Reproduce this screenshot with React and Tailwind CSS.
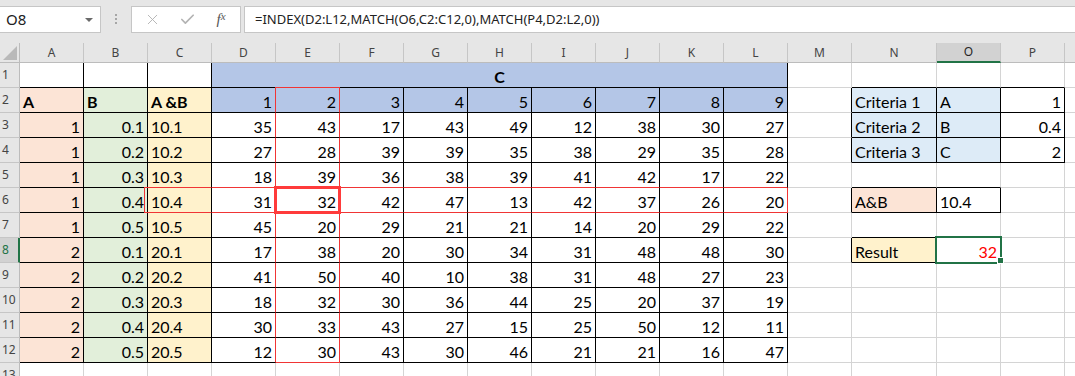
import { X, Check } from 'lucide-react';

const COLS = ['A', 'B', 'C', 'D', 'E', 'F', 'G', 'H', 'I', 'J', 'K', 'L', 'M', 'N', 'O', 'P', 'Q'];

const DATA = [
  [35, 43, 17, 43, 49, 12, 38, 30, 27],
  [27, 28, 39, 39, 35, 38, 29, 35, 28],
  [18, 39, 36, 38, 39, 41, 42, 17, 22],
  [31, 32, 42, 47, 13, 42, 37, 26, 20],
  [45, 20, 29, 21, 21, 14, 20, 29, 22],
  [17, 38, 20, 30, 34, 31, 48, 48, 30],
  [41, 50, 40, 10, 38, 31, 48, 27, 23],
  [18, 32, 30, 36, 44, 25, 20, 37, 19],
  [30, 33, 43, 27, 15, 25, 50, 12, 11],
  [12, 30, 43, 30, 46, 21, 21, 16, 47],
];

const CRITERIA = [
  ['Criteria 1', 'A', '1'],
  ['Criteria 2', 'B', '0.4'],
  ['Criteria 3', 'C', '2'],
];

// cells that carry a black border
const boxed = (r, c) =>
  (r >= 1 && r <= 12 && c >= 0 && c <= 11) ||
  (r >= 2 && r <= 4 && c >= 13 && c <= 15) ||
  ((r === 6 || r === 8) && c >= 13 && c <= 14);

// red outline round column E (rows 2-12) and row 6 (C-L)
const redRight = (r, c) => ((c === 3 || c === 4) && r >= 2 && r <= 12) || (c === 11 && r === 6);
const redBottom = (r, c) =>
  (c === 4 && r === 12) || ((r === 5 || r === 6) && c >= 2 && c <= 11);

const cellOf = (r, c) => {
  if (r === 2) {
    if (c === 0) return { v: 'A', bold: true, bg: 'bg-[#fce4d6]' };
    if (c === 1) return { v: 'B', bold: true, bg: 'bg-[#e2efda]' };
    if (c === 2) return { v: 'A &B', bold: true, bg: 'bg-[#fff2cc]' };
    if (c >= 3 && c <= 11) return { v: String(c - 2), right: true, bg: 'bg-[#b4c6e7]' };
  }
  if (r >= 3 && r <= 12) {
    const i = r - 3;
    if (c === 0) return { v: i < 5 ? '1' : '2', right: true, bg: 'bg-[#fce4d6]' };
    if (c === 1) return { v: '0.' + ((i % 5) + 1), right: true, bg: 'bg-[#e2efda]' };
    if (c === 2) return { v: (i < 5 ? '10.' : '20.') + ((i % 5) + 1), bg: 'bg-[#fff2cc]' };
    if (c >= 3 && c <= 11) return { v: String(DATA[i][c - 3]), right: true };
  }
  if (r >= 2 && r <= 4 && c >= 13 && c <= 15) {
    const row = CRITERIA[r - 2];
    if (c === 13) return { v: row[0], bg: 'bg-[#ddebf7]' };
    if (c === 14) return { v: row[1], bg: 'bg-[#ddebf7]' };
    return { v: row[2], right: true };
  }
  if (r === 6 && c === 13) return { v: 'A&B', bg: 'bg-[#fce4d6]' };
  if (r === 6 && c === 14) return { v: '10.4' };
  if (r === 8 && c === 13) return { v: 'Result', bg: 'bg-[#fff2cc]' };
  if (r === 8 && c === 14) return { v: '32', right: true, red: true };
  return { v: '' };
};

function Cell({ r, c }) {
  const cell = cellOf(r, c);
  let right = 'border-r-[#d4d4d4]';
  if (redRight(r, c)) right = 'border-r-[#f03535]';
  else if (boxed(r, c) || boxed(r, c + 1)) right = 'border-r-black';
  let bottom = 'border-b-[#d4d4d4]';
  if (redBottom(r, c)) bottom = 'border-b-[#f03535]';
  else if (boxed(r, c) || boxed(r + 1, c)) bottom = 'border-b-black';
  return (
    <div
      className={[
        'flex items-end overflow-hidden whitespace-nowrap border-r border-b px-[3px] font-[Lato,sans-serif] leading-[20px]',
        right,
        bottom,
        cell.right ? 'justify-end' : 'justify-start',
        cell.bold ? 'font-bold' : '',
        cell.red ? 'text-[#ff0000]' : 'text-black',
        cell.bg || 'bg-white',
      ].join(' ')}
    >
      {cell.v}
    </div>
  );
}

function FormulaBar() {
  return (
    <div className="flex h-[43px] items-start bg-[#e6e6e6] pt-[6px]">
      <div className="flex h-[27px] w-[101px] items-center justify-between border border-l-0 border-[#c6c6c6] bg-white pl-[6px] pr-[7px] text-[15px] text-[#222]">
        <span>O8</span>
        <span className="h-0 w-0 border-x-[4px] border-t-[4px] border-x-transparent border-t-[#6a6a6a]" />
      </div>
      <div className="flex w-[30px] flex-col items-center gap-[2px] pt-[8px]">
        <span className="h-[2px] w-[2px] bg-[#a6a6a6]" />
        <span className="h-[2px] w-[2px] bg-[#a6a6a6]" />
        <span className="h-[2px] w-[2px] bg-[#a6a6a6]" />
      </div>
      <div className="flex h-[27px] w-[110px] items-center border border-[#c6c6c6] bg-white">
        <span className="flex w-[38px] justify-center pl-[2px] text-[#b3b3b3]">
          <X size={17} strokeWidth={1.3} />
        </span>
        <span className="flex w-[34px] justify-center text-[#b3b3b3]">
          <Check size={17} strokeWidth={2.4} />
        </span>
        <span className="flex w-[34px] justify-center font-['Liberation_Serif',serif] text-[15px] italic text-[#555]">
          f<span className="text-[11px]">x</span>
        </span>
      </div>
      <div className="ml-[3px] flex h-[27px] flex-1 items-center border border-r-0 border-[#c6c6c6] bg-white pl-[10px] text-[13px] text-[#222]">
        =INDEX(D2:L12,MATCH(O6,C2:C12,0),MATCH(P4,D2:L2,0))
      </div>
    </div>
  );
}

export default function App() {
  const rows = Array.from({ length: 13 }, (_, i) => i + 1);
  return (
    <div className="h-[376px] w-[1075px] overflow-hidden bg-white font-['Noto_Sans',sans-serif]">
      <FormulaBar />
      <div className="relative grid grid-cols-[20px_repeat(13,64px)_85px_64px_64px_64px] grid-rows-[20px_repeat(13,25px)] text-[16px]">
        {/* select-all corner */}
        <div className="flex items-end justify-end border-r border-b border-[#bcbcbc] bg-[#e6e6e6] p-[2px]">
          <svg width="14" height="14" viewBox="0 0 14 14">
            <path d="M14 0 L14 14 L0 14 Z" fill="#b9b9b9" />
          </svg>
        </div>
        {COLS.map((col) => (
          <div
            key={col}
            className={
              col === 'O'
                ? 'flex items-center justify-center border-r border-r-[#c6c6c6] border-b-2 border-b-[#217346] bg-[#d2d2d2] text-[12px] text-[#262626]'
                : 'flex items-center justify-center border-r border-b border-r-[#c6c6c6] border-b-[#bcbcbc] bg-[#e6e6e6] text-[12px] text-[#444]'
            }
          >
            {col === 'Q' ? '' : col}
          </div>
        ))}
        {rows.map((r) => [
          <div
            key={'h' + r}
            className={
              r === 8
                ? 'flex items-center border-r-2 border-b border-r-[#217346] border-b-[#c6c6c6] bg-[#d2d2d2] pl-[2px] text-[12px] text-[#217346]'
                : 'flex items-center border-r border-b border-r-[#bcbcbc] border-b-[#c6c6c6] bg-[#e6e6e6] pl-[2px] text-[12px] text-[#444]'
            }
          >
            {r}
          </div>,
          ...COLS.map((_, c) => {
            if (r === 1 && c === 3) {
              return (
                <div
                  key={r + '-' + c}
                  className="relative col-span-9 flex items-end justify-center border-r border-b border-black bg-[#b4c6e7] font-[Lato,sans-serif] leading-[20px] font-bold"
                >
                  C
                  {/* top edge of the column E outline */}
                  <span className="absolute -bottom-px left-[63px] h-px w-[65px] bg-[#f03535]" />
                </div>
              );
            }
            if (r === 1 && c > 3 && c <= 11) return null;
            return <Cell key={r + '-' + c} r={r} c={c} />;
          }),
        ])}

        {/* row 6 outline starts a little inside column B */}
        <div className="pointer-events-none absolute top-[144px] left-[144px] z-10 h-[26px] w-[4px] border-y border-l border-[#f03535]" />
        {/* matched cell E6 */}
        <div className="pointer-events-none absolute top-[143px] left-[274px] z-20 h-[28px] w-[67px] border-[3px] border-[#ff3b3b]" />
        {/* active cell O8 */}
        <div className="pointer-events-none absolute top-[193px] left-[935px] z-20 h-[28px] w-[67px] border-2 border-[#217346]" />
        <div className="pointer-events-none absolute top-[214px] left-[997px] z-20 h-[7px] w-[7px] border border-white bg-[#217346]" />
      </div>
    </div>
  );
}
